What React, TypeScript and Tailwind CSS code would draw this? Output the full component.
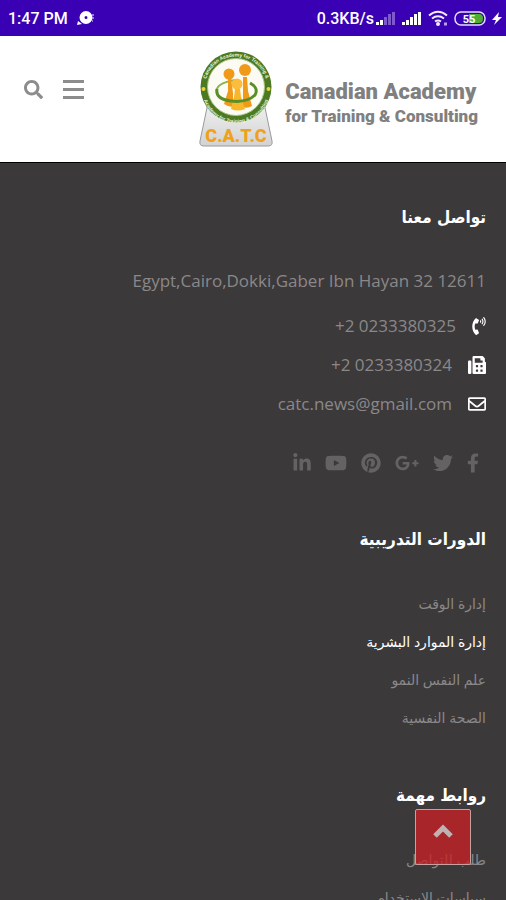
import {
  FaFacebookF,
  FaFax,
  FaGooglePlusG,
  FaLinkedinIn,
  FaPhoneVolume,
  FaPinterest,
  FaRegEnvelope,
  FaSearch,
  FaTwitter,
  FaYoutube
} from 'react-icons/fa'

interface FooterLink {
  label: string
  active?: boolean
}

const contacts = [
  { text: '+2 0233380325', href: 'tel:+20233380325', icon: <FaPhoneVolume className="h-[18px] w-3.5" /> },
  { text: '+2 0233380324', href: 'tel:+20233380324', icon: <FaFax className="h-[18px] w-[18px]" /> },
  { text: 'catc.news@gmail.com', href: 'mailto:catc.news@gmail.com', icon: <FaRegEnvelope className="h-[18px] w-[18px]" /> }
]

const socials = [
  { name: 'Facebook', icon: <FaFacebookF className="h-5 w-3" /> },
  { name: 'Twitter', icon: <FaTwitter className="h-5 w-5" /> },
  { name: 'Google Plus', icon: <FaGooglePlusG className="h-6 w-6" /> },
  { name: 'Pinterest', icon: <FaPinterest className="h-5 w-5" /> },
  { name: 'YouTube', icon: <FaYoutube className="h-[22px] w-[22px]" /> },
  { name: 'LinkedIn', icon: <FaLinkedinIn className="h-5 w-[18px]" /> }
]

const courses: FooterLink[] = [
  { label: 'إدارة الوقت' },
  { label: 'إدارة الموارد البشرية', active: true },
  { label: 'علم النفس النمو' },
  { label: 'الصحة النفسية' }
]

const importantLinks: FooterLink[] = [
  { label: 'طلب للتواصل' },
  { label: 'سياسات الاستخدام' }
]

const StatusBar = () => (
  <div className="flex h-9 shrink-0 items-center bg-[#3a00b3] pr-1 pl-2 font-['Roboto',sans-serif] font-medium text-white">
    <span className="pt-px text-base">1:47 PM</span>
    <svg className="ml-2 h-4 w-5" viewBox="0 0 20 16" fill="none">
      <circle cx="10" cy="7.500" r="4" stroke="#fff" strokeWidth="5" />
      <path d="M1 15l1-4 4 3z" fill="#fff" />
      <path d="M16 5h2M16 8h2M16 11h1" stroke="#b9a0e8" strokeWidth="1.5" />
    </svg>
    <span className="ml-auto pt-px text-base">0.3KB/s</span>
    <svg className="ml-0.5 h-4 w-5" viewBox="0 0 20 16" fill="#fff">
      <path d="M0 12h3v3H0zM4 10h3v5H4z" />
      <path opacity=".35" d="M8 7h3v8H8zM12 4h3v11h-3zM16 2h3v13h-3z" />
    </svg>
    <svg className="ml-1.5 h-4 w-5" viewBox="0 0 20 16" fill="#fff">
      <path d="M0 12h3v3H0zM4 10h3v5H4zM8 7h3v8H8zM12 4h3v11h-3zM16 2h3v13h-3z" />
    </svg>
    <svg className="ml-1.5 h-4 w-5" viewBox="0 0 20 16" fill="none" stroke="#f1ebff" strokeWidth="2">
      <path d="M1 5.500Q10-2 19 5.500M4 8.500Q10 4 16 8.500M7 11.500Q10 9.500 13 11.500" />
      <circle cx="10" cy="14" r="1" fill="#fff" />
      <path d="M16 14h3" strokeWidth="3" stroke="#b9a0e8" />
    </svg>
    <svg className="ml-1.5 h-4 w-8" viewBox="0 0 32 16">
      <rect x="1" y="2" width="30" height="13" rx="6" fill="none" stroke="#e5dcfa" strokeWidth="1.5" />
      <path d="M15 4h10q4 0 4 4.500T25 13H15z" fill="#4fae32" />
      <text x="15" y="12.500" textAnchor="middle" fontSize="11" fontWeight="700" fill="#fff">55</text>
    </svg>
    <svg className="ml-1.5 h-4 w-2.5" viewBox="0 0 10 16" fill="#fff">
      <path d="M7 2L0 10h4L2 15l8-8H6z" />
    </svg>
  </div>
)

const LogoMark = () => (
  <svg className="h-24 w-[74px]" viewBox="0 0 74 96" role="img" aria-label="C.A.T.C">
    <defs>
      <linearGradient id="stand" x1="0" y1="0" x2="0" y2="1">
        <stop offset="0" stopColor="#f1f1f1" />
        <stop offset="1" stopColor="#d2d2d2" />
      </linearGradient>
      <path id="ringTop" d="M6 36.500a31 31 0 0 1 62 0" />
      <path id="ringBottom" d="M3 38a34 34 0 0 0 68 0" />
    </defs>
    <path d="M9 52h56l8 38q1 5-4 5H5q-5 0-4-5z" fill="url(#stand)" stroke="#9a9a9a" />
    <circle cx="37" cy="36" r="35.500" fill="#4c7a22" />
    <circle cx="37" cy="36" r="28.500" fill="#fbfbf4" stroke="#a9c384" />
    <g fontFamily="Liberation Sans, sans-serif" fontSize="5" fontWeight="700" fill="#eef5df">
      <text><textPath href="#ringTop" startOffset="50%" textAnchor="middle">Canadian Academy for Training &amp;</textPath></text>
      <text><textPath href="#ringBottom" startOffset="50%" textAnchor="middle">Academy for Training &amp; Consulting</textPath></text>
    </g>
    <circle cx="4.500" cy="38" r="2" fill="#e8d43a" />
    <circle cx="69.500" cy="38" r="2" fill="#e8d43a" />
    <path d="M37 29Q16 32 18 41" fill="none" stroke="#8bb552" strokeWidth="2" />
    <g fill="#f09a1a">
      <path d="M44 26h4l1 14 4 15q-5 3-9 1z" />
      <path d="M29 26h3l2 16v14q-5 0-9-3l4-13z" />
      <circle cx="46" cy="19" r="6" />
      <circle cx="30" cy="23" r="5.500" />
      <path d="M36 38h5l1 8 4 12q-7 3-14 0l3-12z" fill="#f8b62b" />
      <circle cx="38" cy="33" r="5.500" fill="#fbbd3a" />
    </g>
    <path d="M18 38q-2 10 14 12t24-6q4-7-5-12" fill="none" stroke="#5a8f28" strokeWidth="3" />
    <text x="37" y="91" textAnchor="middle" fontFamily="Roboto, sans-serif" fontSize="18" fontWeight="900" fill="#f0a11c">C.A.T.C</text>
  </svg>
)

const Header = () => (
  <header className="flex h-[127px] shrink-0 items-center border-b border-black bg-white pr-7 pl-6">
    <div className="flex items-center gap-5 pb-5 text-[#8c8c8c]">
      <button type="button" aria-label="Search">
        <FaSearch className="h-[19px] w-[19px]" />
      </button>
      <button type="button" aria-label="Menu" className="flex w-[21px] flex-col gap-[5px]">
        <span className="h-[3px] w-full bg-[#8c8c8c]" />
        <span className="h-[3px] w-full bg-[#8c8c8c]" />
        <span className="h-[3px] w-full bg-[#8c8c8c]" />
      </button>
    </div>
    <a href="#" className="ml-auto flex items-center gap-3">
      <LogoMark />
      <span className="flex flex-col pt-2 font-['Roboto',sans-serif] font-black whitespace-nowrap text-[#808080]">
        <span className="text-[22px] leading-[26px]">Canadian Academy</span>
        <span className="text-[17px] leading-[22px]">for Training &amp; Consulting</span>
      </span>
    </a>
  </header>
)

const SectionTitle = ({ children }: { children: string }) => (
  <h2 className="h-7 font-['DejaVu_Sans_Condensed','DejaVu_Sans',sans-serif] text-[17px] leading-7 font-bold text-white">
    {children}
  </h2>
)

const LinkList = ({ links }: { links: FooterLink[] }) => (
  <ul className="flex flex-col pt-8">
    {links.map(link => (
      <li key={link.label} className="flex h-[38px] items-center">
        <a href="#" className={link.active ? 'text-white' : 'text-[#8a8889]'}>
          {link.label}
        </a>
      </li>
    ))}
  </ul>
)

const App = () => {
  return (
    <div className="flex h-screen flex-col overflow-hidden bg-[#3c393a]">
      <StatusBar />
      <Header />

      <footer dir="rtl" className="min-h-0 flex-1 px-5 pt-10 font-['Open_Sans','DejaVu_Sans',sans-serif] text-sm">
        <SectionTitle>تواصل معنا</SectionTitle>
        <address className="pt-9 text-[17px] leading-7 text-[#8a8889] not-italic">
          <p dir="ltr" className="text-right">Egypt,Cairo,Dokki,Gaber Ibn Hayan 32 12611</p>
          <ul className="pt-[11px]">
            {contacts.map(contact => (
              <li key={contact.text} className="flex h-[39px] items-center gap-4">
                <span className="text-white">{contact.icon}</span>
                <a href={contact.href} dir="ltr">{contact.text}</a>
              </li>
            ))}
          </ul>
        </address>

        {/* Social icons */}
        <div className="flex h-20 items-center gap-3.5 px-[7px] text-[#646263]">
          {socials.map(social => (
            <a key={social.name} href="#" aria-label={social.name}>
              {social.icon}
            </a>
          ))}
        </div>

        <div className="pt-[22px]">
          <SectionTitle>الدورات التدريبية</SectionTitle>
          <LinkList links={courses} />
        </div>

        <div className="pt-11">
          <SectionTitle>روابط مهمة</SectionTitle>
          <LinkList links={importantLinks} />
        </div>
      </footer>

      {/* Back to top */}
      <button
        type="button"
        aria-label="Back to top"
        className="fixed right-[35px] bottom-[35px] flex h-14 w-14 items-center justify-center rounded-xs border border-[#c8a0a0] bg-[#cc1f26]/75 pb-3 text-[#c0b2b2]"
      >
        <svg className="h-5 w-5" viewBox="0 0 20 20" fill="none" stroke="currentColor" strokeWidth="5">
          <path d="M2 15l8-8 8 8" />
        </svg>
      </button>
    </div>
  )
}

export default App
